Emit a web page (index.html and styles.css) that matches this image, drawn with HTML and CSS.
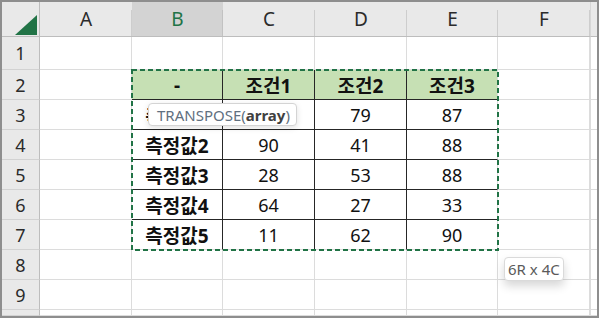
FILE: index.html
```html
<!DOCTYPE html>
<html lang="ko">
<head>
<meta charset="utf-8">
<title>TRANSPOSE</title>
<link rel="stylesheet" href="styles.css">
</head>
<body>
<div class="sheet">
  <div class="grid">
    <!-- column headers -->
    <div class="corner"><svg width="36" height="34" viewBox="0 0 36 34"><polygon points="35,13 35,33 13,33" fill="#217346"/></svg></div>
    <div class="ch">A</div><div class="ch sel">B</div><div class="ch">C</div><div class="ch">D</div><div class="ch">E</div><div class="ch">F</div><div class="ch fill"></div>

    <!-- row 1 -->
    <div class="rh">1</div><div class="c"></div><div class="c"></div><div class="c"></div><div class="c"></div><div class="c"></div><div class="c f"></div><div class="c fill"></div>
    <!-- row 2 -->
    <div class="rh">2</div><div class="c"></div><div class="c hd ir ib">-</div><div class="c hd ir ib">조건1</div><div class="c hd ir ib">조건2</div><div class="c hd ib">조건3</div><div class="c f"></div><div class="c fill"></div>
    <!-- row 3 -->
    <div class="rh">3</div><div class="c"></div><div class="c lb ir ib">측정값1</div><div class="c ir ib"></div><div class="c ir ib">79</div><div class="c ib">87</div><div class="c f"></div><div class="c fill"></div>
    <!-- row 4 -->
    <div class="rh">4</div><div class="c"></div><div class="c lb ir ib">측정값2</div><div class="c ir ib">90</div><div class="c ir ib">41</div><div class="c ib">88</div><div class="c f"></div><div class="c fill"></div>
    <!-- row 5 -->
    <div class="rh">5</div><div class="c"></div><div class="c lb ir ib">측정값3</div><div class="c ir ib">28</div><div class="c ir ib">53</div><div class="c ib">88</div><div class="c f"></div><div class="c fill"></div>
    <!-- row 6 -->
    <div class="rh">6</div><div class="c"></div><div class="c lb ir ib">측정값4</div><div class="c ir ib">64</div><div class="c ir ib">27</div><div class="c ib">33</div><div class="c f"></div><div class="c fill"></div>
    <!-- row 7 -->
    <div class="rh">7</div><div class="c"></div><div class="c lb ir">측정값5</div><div class="c ir">11</div><div class="c ir">62</div><div class="c">90</div><div class="c f"></div><div class="c fill"></div>
    <!-- row 8 -->
    <div class="rh">8</div><div class="c"></div><div class="c"></div><div class="c"></div><div class="c"></div><div class="c"></div><div class="c f"></div><div class="c fill"></div>
    <!-- row 9 -->
    <div class="rh">9</div><div class="c"></div><div class="c"></div><div class="c"></div><div class="c"></div><div class="c"></div><div class="c f"></div><div class="c fill"></div>
    <!-- row 10, cut off by the window -->
    <div class="rh"></div><div class="c"></div><div class="c"></div><div class="c"></div><div class="c"></div><div class="c"></div><div class="c f"></div><div class="c fill"></div>

    <!-- copy marquee around B2:E7 -->
    <div class="marquee"><svg width="368" height="182" viewBox="0 0 368 182"><rect x="1" y="1" width="366" height="180" fill="none" stroke="#217346" stroke-width="2" stroke-dasharray="5 3"/></svg></div>

    <!-- function hint shown while editing B3 -->
    <div class="hint">TRANSPOSE(<b>array</b>)</div>

    <!-- selection size badge -->
    <div class="size">6R x 4C</div>
  </div>
</div>
</body>
</html>
```

FILE: styles.css
```css
html, body {
  margin: 0;
  padding: 0;
  background: #fff;
}

.sheet {
  width: 599px;
  height: 318px;
  box-sizing: border-box;
  border: 2px solid #8e8e8e;
  overflow: hidden;
  font-family: "Noto Sans", "Noto Sans CJK KR", sans-serif;
  color: #111;
}

.grid {
  position: relative;
  display: grid;
  grid-template-columns: 38px 92px 91px 92px 92px 91px 92px 1fr;
  grid-template-rows: 35px 33px repeat(8, 30px) 1fr;
  height: 100%;
}

.grid > div {
  box-sizing: border-box;
}

/* headers */
.corner {
  background: #e9e9e9;
  border-right: 1px solid #bdbdbd;
  border-bottom: 1px solid #bdbdbd;
}
.corner svg {
  display: block;
}

.ch {
  display: flex;
  align-items: center;
  justify-content: center;
  font-size: 19px;
  color: #2b2b2b;
  border-bottom: 1px solid #bdbdbd;
  background: linear-gradient(#cdcdcd, #cdcdcd) right bottom / 1px calc(100% - 8px) no-repeat, #e9e9e9;
}
.ch.sel {
  background: linear-gradient(#c2c2c2, #c2c2c2) right bottom / 1px calc(100% - 8px) no-repeat, #d3d3d3;
  color: #217346;
}
.ch.fill {
  background: #e9e9e9;
  border-left: 1px solid #d6d6d6;
}

.rh {
  display: flex;
  align-items: center;
  justify-content: center;
  font-size: 18px;
  color: #2b2b2b;
  background: #e9e9e9;
  border-right: 1px solid #bdbdbd;
  border-bottom: 1px solid #d2d2d2;
}

/* cells */
.c {
  display: flex;
  align-items: center;
  justify-content: center;
  font-size: 18px;
  border-right: 1px solid #dcdcdc;
  border-bottom: 1px solid #dcdcdc;
  white-space: nowrap;
  overflow: hidden;
}
.c.fill {
  border-right: none;
  border-left: 1px solid #dcdcdc;
}
.c.hd {
  background: #c6e0b4;
  font-weight: 700;
  font-size: 19px;
}
.c.lb {
  font-weight: 700;
  font-size: 19px;
}
.c.ir {
  border-right-color: #262626;
}
.c.ib {
  border-bottom-color: #262626;
}

/* overlays */
.marquee {
  position: absolute;
  grid-column: 3 / 7;
  grid-row: 3 / 9;
  top: -1px;
  left: -1px;
  pointer-events: none;
}
.marquee svg {
  display: block;
}

.hint {
  position: absolute;
  grid-column: 3 / 6;
  grid-row: 4;
  top: 3px;
  left: 16px;
  height: 23px;
  box-sizing: border-box;
  padding: 0 6px 0 8px;
  display: flex;
  align-items: center;
  background: #fff;
  border: 1px solid #d4d4d4;
  border-radius: 4px;
  box-shadow: 0 2px 6px rgba(0, 0, 0, 0.12);
  font-size: 15px;
  color: #5f6f80;
  white-space: nowrap;
}
.hint b {
  color: #404040;
  font-weight: 700;
}

.size {
  position: absolute;
  grid-column: 7;
  grid-row: 9;
  top: 7px;
  left: 6px;
  height: 24px;
  box-sizing: border-box;
  padding: 0 3px;
  display: flex;
  align-items: center;
  background: #fff;
  border: 1px solid #dadada;
  border-radius: 4px;
  box-shadow: 0 5px 10px rgba(0, 0, 0, 0.16);
  font-size: 15px;
  color: #5a5a5a;
  white-space: nowrap;
}
```
